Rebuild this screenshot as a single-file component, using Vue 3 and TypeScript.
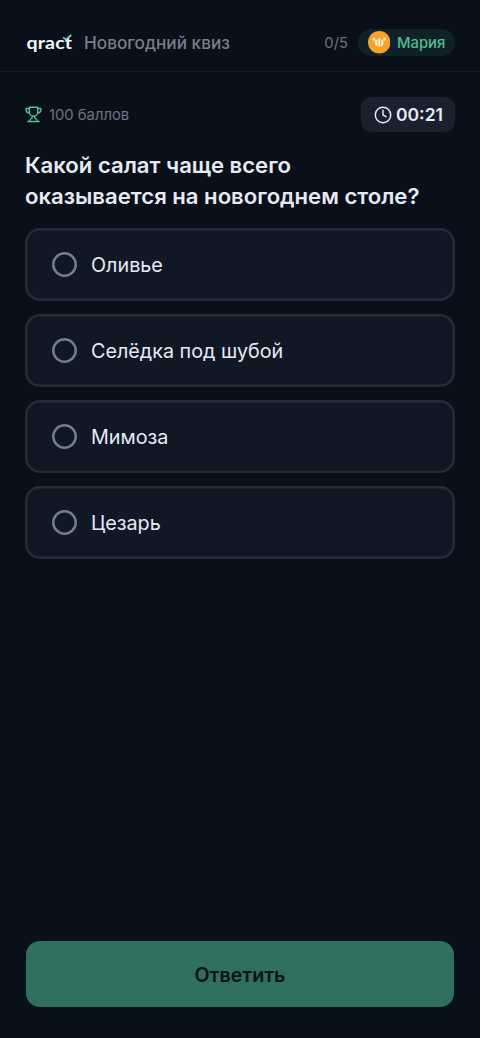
<script setup lang="ts">
import { ref } from 'vue'

const answers: string[] = ['Оливье', 'Селёдка под шубой', 'Мимоза', 'Цезарь']
const selected = ref<string | null>(null)
</script>

<template>
  <div class="screen">
    <header class="header">
      <div class="logo">
        <span class="logo-text">qract</span>
        <svg class="logo-tick" width="10" height="8" viewBox="0 0 10 8" fill="none" stroke="#7fcdb4" stroke-width="1.8">
          <path d="M1 3.4 4 5.7 9.2 1" />
        </svg>
      </div>
      <span class="quiz-name">Новогодний квиз</span>
      <span class="progress">0/5</span>
      <div class="player">
        <svg class="avatar" width="22.5" height="22.5" viewBox="0 0 23 23">
          <circle cx="11.5" cy="11.5" r="11.5" fill="#f6a326" />
          <g fill="#fff3de">
            <circle cx="6" cy="8.2" r="1.6" />
            <circle cx="17" cy="8.2" r="1.6" />
            <path d="M7.2 9.4 9.7 8.6v7.2C7.6 15.2 6.500 13 7.200 9.400Z" />
            <path d="M15.800 9.400 13.300 8.600v7.200c2.100-.6 3.200-2.800 2.500-6.400Z" />
            <path d="M10.600 7.600h1.800v7.700l-.9 1.200-.9-1.200Z" />
          </g>
          <g fill="#f6a326"><circle cx="8.500" cy="11" r=".5" /><circle cx="14.500" cy="11" r=".5" /></g>
        </svg>
        <span class="player-name">Мария</span>
      </div>
    </header>

    <main class="content">
      <div class="meta">
        <div class="points">
          <svg width="17" height="17" viewBox="0 0 18 18" fill="none" stroke="#4fc391" stroke-width="1.5" stroke-linecap="round" stroke-linejoin="round">
            <path d="M4.6 1.3h8.8v5.2a4.4 4.4 0 0 1-8.8 0Z" />
            <path d="M4.6 2.7H1.2v1.4a3.4 3.4 0 0 0 3.4 3.2M13.4 2.7h3.4v1.4a3.4 3.4 0 0 1-3.4 3.2" />
            <path d="M7.7 10.8v1.1c0 1.8-2.9 1.4-2.9 4.4M10.3 10.8v1.1c0 1.8 2.9 1.4 2.9 4.4M3 16.4h12" />
          </svg>
          <span>100 баллов</span>
        </div>
        <div class="timer">
          <svg width="18" height="18" viewBox="0 0 18 18" fill="none" stroke="#e6eaf3" stroke-width="1.5" stroke-linecap="round" stroke-linejoin="round">
            <circle cx="9" cy="9" r="7.7" />
            <path d="M9 4.2V9l3 1.7" />
          </svg>
          <span>00:21</span>
        </div>
      </div>
      <h1 class="question">Какой салат чаще всего<br />оказывается на новогоднем столе?</h1>
      <div class="answers">
        <button
          v-for="answer in answers"
          :key="answer"
          type="button"
          class="answer"
          :class="{ active: selected === answer }"
          @click="selected = answer"
        >
          <span class="radio"></span>
          <span>{{ answer }}</span>
        </button>
      </div>
    </main>

    <button type="button" class="submit">Ответить</button>
  </div>
</template>

<style>
body {
  background: #09101a;
}
</style>

<style scoped>
.screen {
  box-sizing: border-box;
  display: flex;
  flex-direction: column;
  height: 1038px;
  padding-bottom: 31px;
  background: #09101a;
  color: #e6eaf3;
  font-family: Inter, "Liberation Sans", sans-serif;
}
button {
  font-family: inherit;
  margin: 0;
}
.header {
  box-sizing: border-box;
  display: flex;
  align-items: center;
  height: 72px;
  padding: 14px 25px 0 26px;
  border-bottom: 1px solid #151d29;
}
.logo {
  position: relative;
  width: 47px;
  margin-right: 11px;
}
.logo-text {
  display: block;
  width: max-content;
  padding-left: 0.5px;
  font-family: Lato, sans-serif;
  font-size: 17.5px;
  line-height: 22px;
  font-weight: 700;
  letter-spacing: 0.1px;
  color: #f0f5f7;
  transform: scaleX(1.12);
  transform-origin: left;
}
.logo-tick {
  position: absolute;
  top: 2px;
  right: 1px;
}
.quiz-name {
  font-size: 17.2px;
  font-weight: 500;
  color: #777f8d;
}
.progress {
  margin-left: auto;
  margin-right: 10px;
  font-size: 14.8px;
  color: #697384;
}
.player {
  box-sizing: border-box;
  display: flex;
  align-items: center;
  gap: 7px;
  width: 97px;
  height: 27px;
  padding-left: 9.5px;
  border-radius: 14px;
  background: #0f2229;
}
.player-name {
  font-size: 14.8px;
  font-weight: 500;
  color: #4fbd8e;
}
.content {
  flex: 1;
  padding: 25px 25px 0;
}
.meta {
  display: flex;
  align-items: center;
  justify-content: space-between;
}
.points {
  display: flex;
  align-items: center;
  gap: 7px;
  font-size: 14.8px;
  color: #697384;
}
.timer {
  box-sizing: border-box;
  display: flex;
  align-items: center;
  gap: 4px;
  width: 94px;
  height: 35px;
  padding-left: 13px;
  border-radius: 10px;
  background: #1a212e;
  font-size: 17.5px;
  font-weight: 600;
}
.question {
  margin: 18px 0 16px;
  font-size: 22.12px;
  line-height: 31px;
  font-weight: 600;
}
.answers {
  display: flex;
  flex-direction: column;
  gap: 13px;
}
.answer {
  box-sizing: border-box;
  display: flex;
  align-items: center;
  gap: 14.5px;
  height: 73px;
  padding: 0 26.5px;
  border: 0;
  box-shadow: inset 0 0 0 2.5px #252c39;
  border-radius: 15px;
  background: #101725;
  color: #e6eaf3;
  font-size: 19.75px;
  text-align: left;
}
.radio {
  box-sizing: border-box;
  width: 25px;
  height: 25px;
  box-shadow: inset 0 0 0 2.5px #727d8d;
  border-radius: 50%;
}
.active .radio {
  box-shadow: inset 0 0 0 2.5px #4fc391;
}
.submit {
  height: 66px;
  margin: 0 26px;
  padding: 2px 0 0;
  border: 0;
  border-radius: 14px;
  background: #2f6f5e;
  color: #06121a;
  font-size: 19.6px;
  font-weight: 600;
}
</style>
